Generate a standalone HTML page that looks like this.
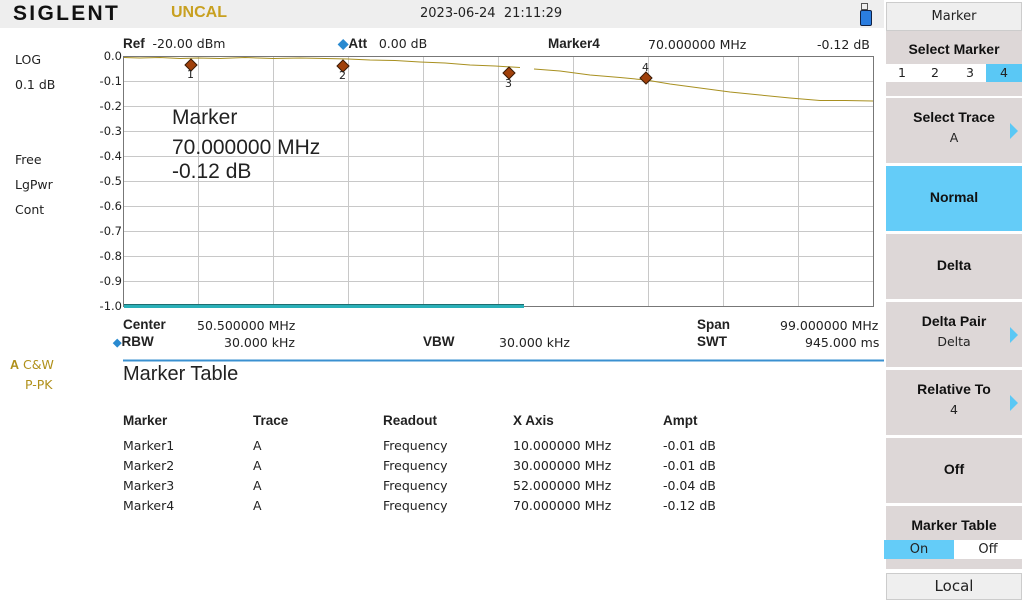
<!DOCTYPE html><html><head><style>
body{margin:0;width:1024px;height:600px;background:#fff;position:relative;overflow:hidden;font-family:"DejaVu Sans","Liberation Sans",sans-serif;font-size:12.5px;color:#222}
.a{position:absolute;white-space:nowrap}
.b{font-family:"Liberation Sans",sans-serif;font-weight:bold;font-size:13.5px}
.btn{position:absolute;left:886px;width:136px;background:#ddd7d7;text-align:center}
.btn .t{font-family:"Liberation Sans",sans-serif;font-weight:bold;font-size:14px;color:#111}
.arr{position:absolute;right:4px;width:0;height:0;border-top:8px solid transparent;border-bottom:8px solid transparent;border-left:8px solid #5ac8f5}
.yl{position:absolute;left:98px;width:24px;text-align:right;font-size:11.5px}
</style></head><body>
<div class="a" style="left:0;top:0;width:884px;height:28px;background:#eeeeee"></div>
<div class="a" style="left:13px;top:2px;font-family:'Liberation Sans',sans-serif;font-weight:900;font-size:21px;letter-spacing:2.3px;color:#111">SIGLENT</div>
<div class="a" style="left:171px;top:4px;font-family:'Liberation Sans',sans-serif;font-weight:bold;font-size:16px;color:#c8a020">UNCAL</div>
<div class="a" style="left:420px;top:6px;font-size:13px">2023-06-24&nbsp;&nbsp;21:11:29</div>
<div class="a" style="left:861px;top:3px;width:5px;height:5px;border:1px solid #555"></div>
<div class="a" style="left:860px;top:10px;width:10px;height:14px;background:#2a7de0;border:1px solid #124;border-radius:2px"></div>

<div class="a b" style="left:123px;top:36px">Ref <span style="font-family:'DejaVu Sans';font-weight:normal;font-size:12.5px">&nbsp;-20.00 dBm</span></div>
<div class="a b" style="left:338px;top:36px"><span style="color:#2a8ad0">◆</span>Att <span style="font-family:'DejaVu Sans';font-weight:normal;font-size:12.5px">&nbsp;&nbsp;0.00 dB</span></div>
<div class="a b" style="left:548px;top:36px">Marker4</div>
<div class="a" style="left:648px;top:37px">70.000000 MHz</div>
<div class="a" style="left:817px;top:37px">-0.12 dB</div>

<div class="a" style="left:15px;top:52px">LOG</div>
<div class="a" style="left:15px;top:77px">0.1 dB</div>
<div class="a" style="left:15px;top:152px">Free</div>
<div class="a" style="left:15px;top:177px">LgPwr</div>
<div class="a" style="left:15px;top:202px">Cont</div>
<div class="a" style="left:10px;top:357px;color:#b0901a"><b style="font-family:'Liberation Sans'">A</b> C&amp;W</div>
<div class="a" style="left:25px;top:377px;color:#b0901a">P-PK</div>

<div class="yl" style="top:49px">0.0</div><div class="yl" style="top:74px">-0.1</div><div class="yl" style="top:99px">-0.2</div><div class="yl" style="top:124px">-0.3</div><div class="yl" style="top:149px">-0.4</div><div class="yl" style="top:174px">-0.5</div><div class="yl" style="top:199px">-0.6</div><div class="yl" style="top:224px">-0.7</div><div class="yl" style="top:249px">-0.8</div><div class="yl" style="top:274px">-0.9</div><div class="yl" style="top:299px">-1.0</div>

<svg class="a" style="left:0;top:0" width="1024" height="600">
<g stroke="#c8c8c8" stroke-width="1">
<line x1="198.5" y1="56" x2="198.5" y2="306"/><line x1="273.5" y1="56" x2="273.5" y2="306"/><line x1="348.5" y1="56" x2="348.5" y2="306"/><line x1="423.5" y1="56" x2="423.5" y2="306"/><line x1="498.5" y1="56" x2="498.5" y2="306"/><line x1="573.5" y1="56" x2="573.5" y2="306"/><line x1="648.5" y1="56" x2="648.5" y2="306"/><line x1="723.5" y1="56" x2="723.5" y2="306"/><line x1="798.5" y1="56" x2="798.5" y2="306"/>
<line x1="123" y1="81.5" x2="873" y2="81.5"/><line x1="123" y1="106.5" x2="873" y2="106.5"/><line x1="123" y1="131.5" x2="873" y2="131.5"/><line x1="123" y1="156.5" x2="873" y2="156.5"/><line x1="123" y1="181.5" x2="873" y2="181.5"/><line x1="123" y1="206.5" x2="873" y2="206.5"/><line x1="123" y1="231.5" x2="873" y2="231.5"/><line x1="123" y1="256.5" x2="873" y2="256.5"/><line x1="123" y1="281.5" x2="873" y2="281.5"/>
</g>
<rect x="123.5" y="56.5" width="750" height="250" fill="none" stroke="#777"/>
<polyline fill="none" stroke="#a89020" stroke-width="1" points="124,57.5 140,58 160,57.5 180,58.5 198,58 220,58.5 245,57.5 273,58.5 300,58 325,58.5 348,59 370,60 395,60.5 420,62 445,63 470,65 495,66 520,67.5"/>
<polyline fill="none" stroke="#a89020" stroke-width="1" points="534,69 560,71 590,75 620,77.5 646,80 670,84 700,88 730,92 760,95 790,98 820,100.5 845,100.5 873,101"/>
<rect x="124" y="305" width="400" height="3" fill="#2ab0b8"/>
<line x1="124" y1="304.5" x2="524" y2="304.5" stroke="#1e6e70"/>
<g fill="#a0400a" stroke="#3a1a05" stroke-width="1">
<path d="M191 59 L197 65 L191 71 L185 65Z"/><path d="M343 60 L349 66 L343 72 L337 66Z"/><path d="M509 67 L515 73 L509 79 L503 73Z"/><path d="M646 72 L652 78 L646 84 L640 78Z"/>
</g>
<g font-size="11" fill="#222" font-family="DejaVu Sans"><text x="187" y="78">1</text><text x="339" y="79">2</text><text x="505" y="87">3</text><text x="642" y="71">4</text></g>
<line x1="123" y1="360.5" x2="884" y2="360.5" stroke="#3a90d0" stroke-width="2"/>
</svg>

<div class="a" style="left:172px;top:106px;font-family:'Liberation Sans',sans-serif;font-size:21px">Marker</div>
<div class="a" style="left:172px;top:136px;font-family:'Liberation Sans',sans-serif;font-size:21px">70.000000 MHz</div>
<div class="a" style="left:172px;top:160px;font-family:'Liberation Sans',sans-serif;font-size:21px">-0.12 dB</div>

<div class="a b" style="left:123px;top:317px">Center</div><div class="a" style="left:197px;top:318px">50.500000 MHz</div>
<div class="a b" style="left:113px;top:334px"><span style="color:#2a8ad0;font-size:11px">◆</span>RBW</div><div class="a" style="left:224px;top:335px">30.000 kHz</div>
<div class="a b" style="left:423px;top:334px">VBW</div><div class="a" style="left:499px;top:335px">30.000 kHz</div>
<div class="a b" style="left:697px;top:317px">Span</div><div class="a" style="left:780px;top:318px">99.000000 MHz</div>
<div class="a b" style="left:697px;top:334px">SWT</div><div class="a" style="left:805px;top:335px">945.000 ms</div>

<div class="a" style="left:123px;top:363px;font-family:'Liberation Sans',sans-serif;font-size:20px">Marker Table</div>
<div class="a b" style="left:123px;top:413px">Marker</div><div class="a b" style="left:253px;top:413px">Trace</div><div class="a b" style="left:383px;top:413px">Readout</div><div class="a b" style="left:513px;top:413px">X Axis</div><div class="a b" style="left:663px;top:413px">Ampt</div>
<div class="a" style="left:123px;top:436px;line-height:20px">Marker1<br>Marker2<br>Marker3<br>Marker4</div>
<div class="a" style="left:253px;top:436px;line-height:20px">A<br>A<br>A<br>A</div>
<div class="a" style="left:383px;top:436px;line-height:20px">Frequency<br>Frequency<br>Frequency<br>Frequency</div>
<div class="a" style="left:513px;top:436px;line-height:20px">10.000000 MHz<br>30.000000 MHz<br>52.000000 MHz<br>70.000000 MHz</div>
<div class="a" style="left:663px;top:436px;line-height:20px">-0.01 dB<br>-0.01 dB<br>-0.04 dB<br>-0.12 dB</div>

<div class="btn" style="top:2px;height:27px;background:#efefef;border:1px solid #ccc;width:134px;line-height:27px;font-size:13px">Marker</div>
<div class="btn" style="top:31px;height:65px"><div class="t" style="margin-top:10px">Select Marker</div>
<div style="position:absolute;left:0;top:33px;width:136px;height:18px;background:#fff;font-size:12.5px;line-height:18px">
<span class="a" style="left:12px;top:0">1</span><span class="a" style="left:45px;top:0">2</span><span class="a" style="left:80px;top:0">3</span>
<span class="a" style="left:100px;top:0;width:36px;height:18px;background:#5ac8f5;text-align:center">4</span></div></div>
<div class="btn" style="top:98px;height:65px"><div class="t" style="margin-top:11px">Select Trace</div><div style="margin-top:5px">A</div><div class="arr" style="top:25px"></div></div>
<div class="btn" style="top:166px;height:65px;background:#64ccf8"><div class="t" style="margin-top:23px">Normal</div></div>
<div class="btn" style="top:234px;height:65px"><div class="t" style="margin-top:23px">Delta</div></div>
<div class="btn" style="top:302px;height:65px"><div class="t" style="margin-top:11px">Delta Pair</div><div style="margin-top:5px">Delta</div><div class="arr" style="top:25px"></div></div>
<div class="btn" style="top:370px;height:65px"><div class="t" style="margin-top:11px">Relative To</div><div style="margin-top:5px">4</div><div class="arr" style="top:25px"></div></div>
<div class="btn" style="top:438px;height:65px"><div class="t" style="margin-top:23px">Off</div></div>
<div class="btn" style="top:506px;height:63px"><div class="t" style="margin-top:11px">Marker Table</div>
<div style="position:absolute;left:-2px;top:34px;width:138px;height:19px;background:#fff;font-size:13px;line-height:19px">
<span class="a" style="left:0;top:0;width:70px;height:19px;background:#64ccf8;text-align:center">On</span><span class="a" style="left:72px;top:0;width:64px;text-align:center">Off</span></div></div>
<div class="btn" style="top:573px;height:25px;background:#efefef;border:1px solid #ccc;width:134px;line-height:25px;font-size:15px;font-family:'DejaVu Sans'">Local</div>
</body></html>
